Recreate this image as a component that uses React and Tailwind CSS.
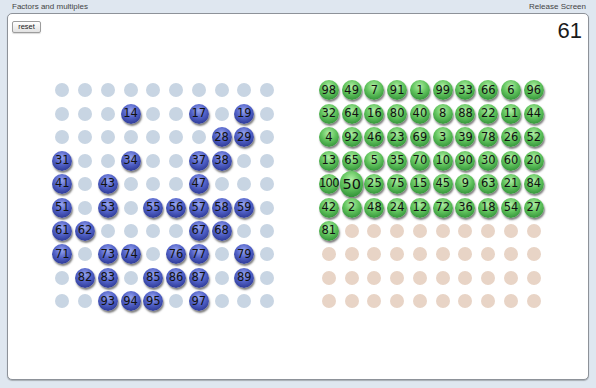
import React from "react";

const CHOSEN = [14, 17, 19, 28, 29, 31, 34, 37, 38, 41, 43, 47, 51, 53, 55, 56, 57, 58, 59, 61, 62, 67, 68, 71, 73, 74, 76, 77, 79, 82, 83, 85, 86, 87, 89, 93, 94, 95, 97];

const PICKED = [
  98, 49, 7, 91, 1, 99, 33, 66, 6, 96,
  32, 64, 16, 80, 40, 8, 88, 22, 11, 44,
  4, 92, 46, 23, 69, 3, 39, 78, 26, 52,
  13, 65, 5, 35, 70, 10, 90, 30, 60, 20,
  100, 50, 25, 75, 15, 45, 9, 63, 21, 84,
  42, 2, 48, 24, 12, 72, 36, 18, 54, 27,
  81,
];

const BALL_FONT = { fontFamily: '"DejaVu Sans", Verdana, sans-serif' };

function Ball({ n, color, big }) {
  const tone =
    color === "blue"
      ? "bg-[radial-gradient(circle_at_48%_32%,#97a4ee_0%,#5262c8_42%,#2b3792_82%,#1a2162_100%)]"
      : "bg-[radial-gradient(circle_at_48%_32%,#b0eea4_0%,#62c45e_42%,#2f8f36_84%,#1d6522_100%)]";
  const size = big ? "h-[26px] w-[26px] text-[14.5px]" : "h-[20px] w-[20px] text-[11.5px]";
  return (
    <div
      className={`flex items-center justify-center rounded-full leading-none text-[#111] shadow-[1px_2px_2px_rgba(0,0,0,0.5)] ${tone} ${size} ${n === 100 ? "tracking-[-0.8px]" : ""}`}
      style={BALL_FONT}
    >
      {n}
    </div>
  );
}

function Cell({ children }) {
  return <div className="flex h-[23.44px] w-[22.78px] items-center justify-center">{children}</div>;
}

export default function App() {
  const left = Array.from({ length: 100 }, (_, i) => i + 1);
  const right = Array.from({ length: 100 }, (_, i) => PICKED[i]);

  return (
    <div
      className="flex h-[388px] w-[596px] flex-col bg-[#dfe7f0] px-[7px] pb-[8px] text-[#333]"
      style={{ fontFamily: '"Liberation Sans", Arial, sans-serif' }}
    >
      <div className="flex h-[13px] items-center justify-between pl-[5px] pr-[3px] text-[8px] leading-none text-[#444]">
        <span>Factors and multiples</span>
        <span>Release Screen</span>
      </div>

      <div className="flex flex-1 flex-col rounded-[5px] border border-[#8d9299] bg-white shadow-[0_1px_1px_rgba(0,0,0,0.25)]">
        <div className="flex h-[64.7px] items-start justify-between pl-[4px] pr-[6px] pt-[6.7px]">
          <button className="flex h-[12px] w-[29px] items-center justify-center rounded-[2px] border border-[#9c9c9c] bg-linear-to-b from-white to-[#e2e2e2] text-[7.5px] leading-none text-[#222] shadow-[0_1px_1px_rgba(0,0,0,0.15)]">
            reset
          </button>
          <div className="mt-[-0.3px] text-[22px] leading-none text-[#1a1a1a]">61</div>
        </div>

        <div className="flex justify-center gap-[39px]">
          <div className="grid grid-cols-[repeat(10,22.78px)]">
            {left.map((n) => (
              <Cell key={n}>
                {CHOSEN.includes(n) ? (
                  <Ball n={n} color="blue" />
                ) : (
                  <div className="h-[14px] w-[14px] rounded-full bg-[#c8d5e3]" />
                )}
              </Cell>
            ))}
          </div>
          <div className="grid grid-cols-[repeat(10,22.78px)]">
            {right.map((n, i) => (
              <Cell key={i}>
                {n ? (
                  <Ball n={n} color="green" big={n === 50} />
                ) : (
                  <div className="h-[14px] w-[14px] rounded-full bg-[#e8d4c6]" />
                )}
              </Cell>
            ))}
          </div>
        </div>
      </div>
    </div>
  );
}
